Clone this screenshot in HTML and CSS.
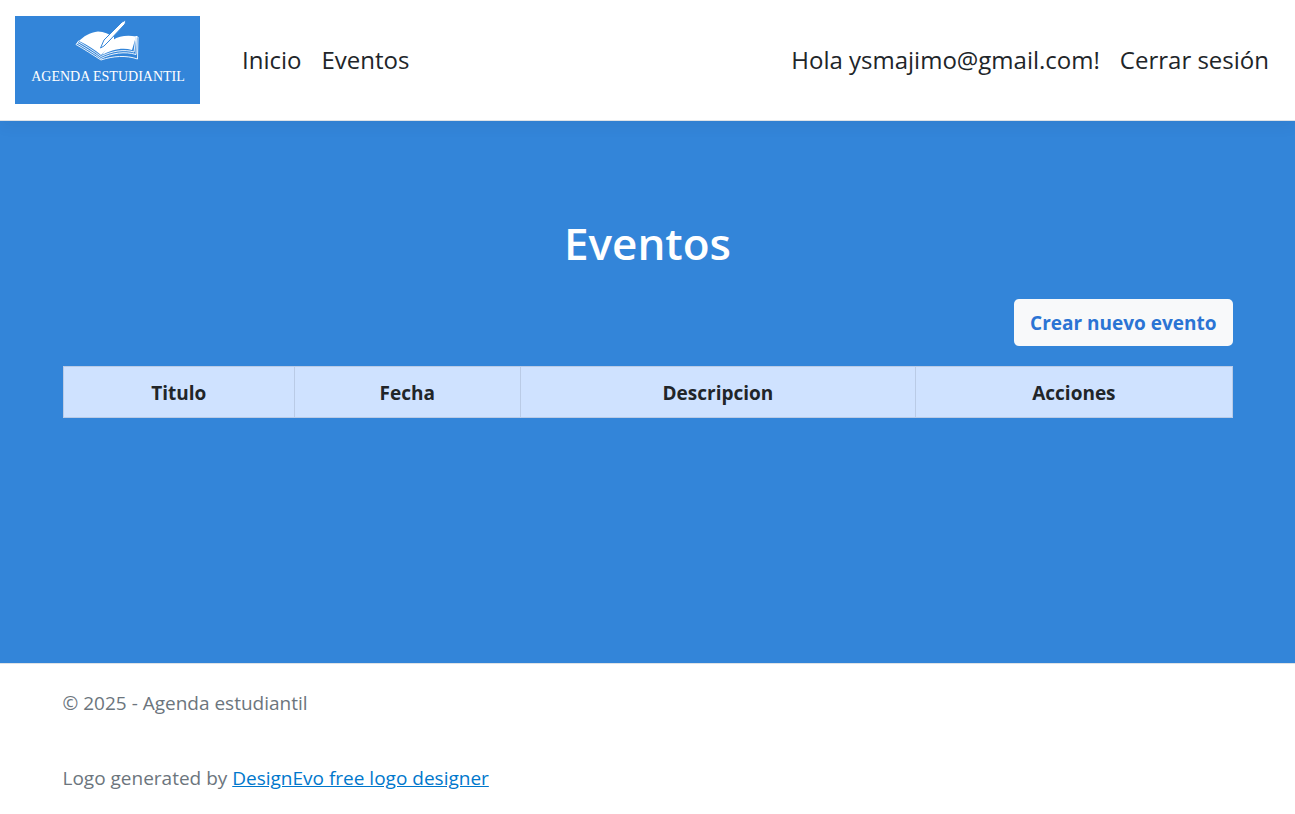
FILE: index.html
```html
<!DOCTYPE html>
<html lang="es">
<head>
<meta charset="utf-8">
<meta name="viewport" content="width=device-width, initial-scale=1">
<title>Eventos - Agenda estudiantil</title>
<link rel="stylesheet" href="styles.css">
</head>
<body>
<header class="header">
  <nav class="navbar">
    <a class="brand" href="#" aria-label="Agenda estudiantil">
      <svg class="brand-logo" viewBox="0 0 185 88" aria-hidden="true">
        <g fill="#fff">
          <path d="M64 25C68 21 75 16 83 15.500C89 15.500 94 18 99 21L99 27L86 39C80 34 73 29 64 25Z"/>
          <path d="M98 24C104 20 112 19 121 20.500L117 34C107 31 96 34 87 39Z"/>
          <path d="M85.500 32L89 24L107 6L111 4L110 8L94 25L89 30Z" stroke="#3385d9" stroke-width="1"/>
        </g>
        <g fill="none" stroke="#fff" stroke-width="0.900">
          <path d="M63 25.500C71 30 79 35 86 40.500C97 35 109 33 119 36L121 20"/>
          <path d="M62 27C70 32 79 37 86 42.500C97 37 110 35 121 38.500L121.500 20"/>
          <path d="M64 24.500L61 28.500C69 33 78 39 86 44C98 40 111 39 122.500 43L123 21L121 20.500"/>
        </g>
        <text class="brand-name" x="93" y="65" text-anchor="middle">AGENDA ESTUDIANTIL</text>
      </svg>
    </a>
    <ul class="nav-list">
      <li><a class="nav-link" href="#">Inicio</a></li>
      <li><a class="nav-link" href="#">Eventos</a></li>
    </ul>
    <ul class="nav-list nav-user">
      <li><a class="nav-link" href="#">Hola ysmajimo@gmail.com!</a></li>
      <li><button class="nav-link" type="button">Cerrar sesión</button></li>
    </ul>
  </nav>
</header>
<main class="main">
  <div class="container">
    <h1 class="title">Eventos</h1>
    <div class="actions"><a class="button" href="#">Crear nuevo evento</a></div>
    <table class="events">
      <colgroup><col class="col-title"><col class="col-date"><col class="col-description"><col></colgroup>
      <thead>
        <tr><th scope="col">Titulo</th><th scope="col">Fecha</th><th scope="col">Descripcion</th><th scope="col">Acciones</th></tr>
      </thead>
    </table>
  </div>
</main>
<footer class="footer">
  <div class="container footer-content">
    <p>© 2025 - Agenda estudiantil</p>
    <p>Logo generated by <a class="footer-link" href="#">DesignEvo free logo designer</a></p>
  </div>
</footer>
</body>
</html>
```
FILE: styles.css
```css
* { box-sizing: border-box; }

body {
  display: flex;
  flex-direction: column;
  min-height: 100vh;
  margin: 0;
  background: #fff;
  color: #212529;
  font-family: "Segoe UI", "Open Sans", "Noto Sans", sans-serif;
  font-size: 19px;
  line-height: 30px;
}

.header {
  position: relative;
  border-bottom: 1px solid #dee2e6;
  box-shadow: 0 5px 15px rgba(0, 0, 0, 0.05);
}

.navbar {
  display: flex;
  flex-wrap: wrap;
  align-items: center;
  padding: 16px;
  padding-left: 15px;
}

.brand { display: block; margin-right: 32px; }

.brand-logo {
  display: block;
  width: 185px;
  height: 88px;
  background: #3385d9;
}

.brand-name {
  fill: #fff;
  font-family: "Liberation Serif", serif;
  font-size: 14px;
}

.nav-list {
  display: flex;
  flex-wrap: wrap;
  margin: 0;
  padding: 0;
  list-style: none;
}

.nav-user { margin-left: auto; }

.nav-link {
  display: block;
  padding: 10px;
  border: 0;
  background: none;
  color: #212529;
  font: inherit;
  font-size: 24px;
  line-height: 36px;
  text-decoration: none;
  cursor: pointer;
}

.main {
  flex: 1;
  padding-top: 90px;
  background: #3385d9;
}

.container {
  width: 100%;
  max-width: 1200px;
  margin: 0 auto;
  padding: 0 15px;
}

.title {
  margin: 0 0 24px;
  color: #fff;
  font-size: 44px;
  font-weight: 600;
  line-height: 64px;
  text-align: center;
}

.actions {
  display: flex;
  justify-content: flex-end;
  margin-bottom: 20px;
}

.button {
  padding: 9px 16px 8px;
  border-radius: 5px;
  background: #f8f9fa;
  color: #2b74d4;
  font-weight: 700;
  line-height: 30px;
  text-decoration: none;
}

.events {
  width: 100%;
  table-layout: fixed;
  border-collapse: collapse;
  background: #cfe2ff;
}

.col-title { width: 19.8%; }
.col-date { width: 19.3%; }
.col-description { width: 33.85%; }

.events th {
  padding: 11px 10px 9px;
  border: 1px solid #bacbe6;
  font-weight: 700;
  line-height: 30px;
}

.footer {
  border-top: 1px solid #dee2e6;
  color: #6c757d;
}

.footer-content {
  display: flex;
  flex-direction: column;
  gap: 45px;
  padding-top: 24px;
  padding-bottom: 21px;
}

.footer p { margin: 0; }

.footer-link { color: #0077cc; }
```
